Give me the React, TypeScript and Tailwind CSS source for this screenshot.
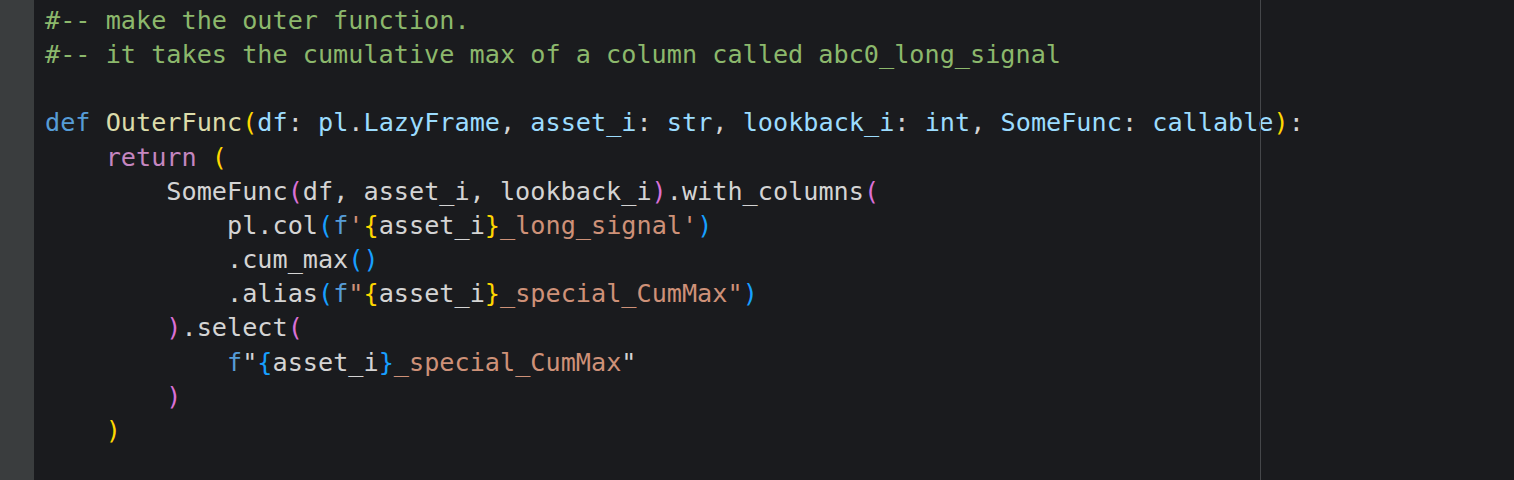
import React from "react";

const C = {
  cm: "text-[#8cb86c]",
  kw: "text-[#569cd6]",
  fn: "text-[#dcdcaa]",
  pr: "text-[#9cdcfe]",
  rt: "text-[#c586c0]",
  st: "text-[#ce9178]",
  tx: "text-[#d4d4d4]",
  b1: "text-[#ffd700]",
  b2: "text-[#da70d6]",
  b3: "text-[#179fff]",
};

type Tok = [string, string];

const lines: Tok[][] = [
  [["#-- make the outer function.", C.cm]],
  [["#-- it takes the cumulative max of a column called abc0_long_signal", C.cm]],
  [],
  [
    ["def ", C.kw],
    ["OuterFunc", C.fn],
    ["(", C.b1],
    ["df", C.pr],
    [": ", C.tx],
    ["pl", C.pr],
    [".", C.tx],
    ["LazyFrame", C.pr],
    [", ", C.tx],
    ["asset_i", C.pr],
    [": ", C.tx],
    ["str", C.pr],
    [", ", C.tx],
    ["lookback_i", C.pr],
    [": ", C.tx],
    ["int", C.pr],
    [", ", C.tx],
    ["SomeFunc", C.pr],
    [": ", C.tx],
    ["callable", C.pr],
    [")", C.b1],
    [":", C.tx],
  ],
  [
    ["    ", C.tx],
    ["return ", C.rt],
    ["(", C.b1],
  ],
  [
    ["        SomeFunc", C.tx],
    ["(", C.b2],
    ["df, asset_i, lookback_i", C.tx],
    [")", C.b2],
    [".with_columns", C.tx],
    ["(", C.b2],
  ],
  [
    ["            pl.col", C.tx],
    ["(", C.b3],
    ["f", C.kw],
    ["'", C.st],
    ["{", C.b1],
    ["asset_i", C.tx],
    ["}", C.b1],
    ["_long_signal'", C.st],
    [")", C.b3],
  ],
  [
    ["            .cum_max", C.tx],
    ["()", C.b3],
  ],
  [
    ["            .alias", C.tx],
    ["(", C.b3],
    ["f", C.kw],
    ['"', C.st],
    ["{", C.b1],
    ["asset_i", C.tx],
    ["}", C.b1],
    ['_special_CumMax"', C.st],
    [")", C.b3],
  ],
  [
    ["        ", C.tx],
    [")", C.b2],
    [".select", C.tx],
    ["(", C.b2],
  ],
  [
    ["            ", C.tx],
    ["f", C.kw],
    ['"', C.tx],
    ["{", C.b3],
    ["asset_i", C.tx],
    ["}", C.b3],
    ["_special_CumMax", C.st],
    ['"', C.tx],
  ],
  [
    ["        ", C.tx],
    [")", C.b2],
  ],
  [
    ["    ", C.tx],
    [")", C.b1],
  ],
];

export default function App() {
  return (
    <div className="relative flex h-[480px] w-full overflow-hidden bg-[#1a1b1e]">
      <div className="h-full w-[34px] shrink-0 bg-[#3a3d3e]" />
      <div
        className="pl-[11px] pt-[4px] text-[25.2px] leading-[34.17px] whitespace-pre text-[#d4d4d4]"
        style={{ fontFamily: '"DejaVu Sans Mono", "Liberation Mono", monospace' }}
      >
        {lines.map((line, i) => (
          <div key={i} className="h-[34.17px]">
            {line.map(([t, c], j) => (
              <span key={j} className={c}>
                {t}
              </span>
            ))}
          </div>
        ))}
      </div>
      <div className="absolute left-[1260px] top-0 bottom-0 w-px bg-[#45474a]" />
    </div>
  );
}
